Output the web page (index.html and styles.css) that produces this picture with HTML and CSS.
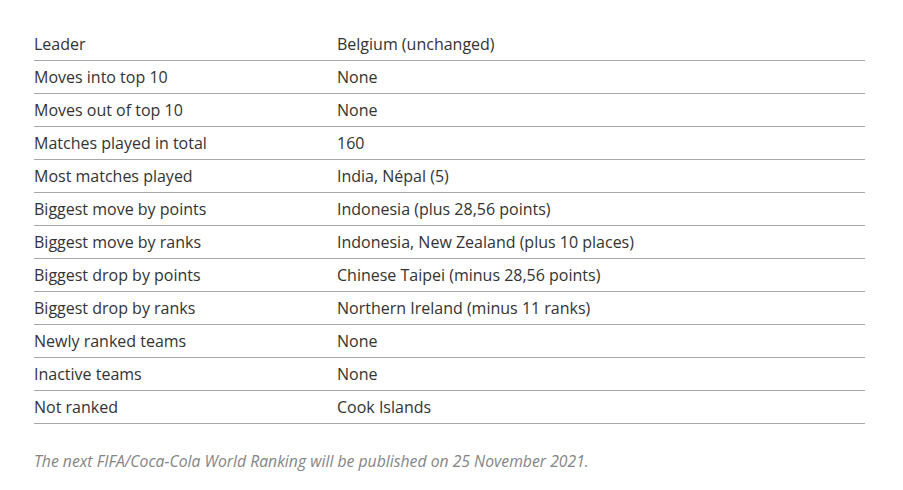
FILE: index.html
```html
<!DOCTYPE html>
<html>
<head>
<meta charset="utf-8">
<link rel="stylesheet" href="styles.css">
</head>
<body>
<div class="wrap">
  <table class="stats">
    <tbody>
      <tr><td>Leader</td><td>Belgium (unchanged)</td></tr>
      <tr><td>Moves into top 10</td><td>None</td></tr>
      <tr><td>Moves out of top 10</td><td>None</td></tr>
      <tr><td>Matches played in total</td><td>160</td></tr>
      <tr><td>Most matches played</td><td>India, Népal (5)</td></tr>
      <tr><td>Biggest move by points</td><td>Indonesia (plus 28,56 points)</td></tr>
      <tr><td>Biggest move by ranks</td><td>Indonesia, New Zealand (plus 10 places)</td></tr>
      <tr><td>Biggest drop by points</td><td>Chinese Taipei (minus 28,56 points)</td></tr>
      <tr><td>Biggest drop by ranks</td><td>Northern Ireland (minus 11 ranks)</td></tr>
      <tr><td>Newly ranked teams</td><td>None</td></tr>
      <tr><td>Inactive teams</td><td>None</td></tr>
      <tr><td>Not ranked</td><td>Cook Islands</td></tr>
    </tbody>
  </table>
  <p class="note">The next FIFA/Coca-Cola World Ranking will be published on 25 November 2021.</p>
</div>
</body>
</html>
```
FILE: styles.css
```css
html, body {
  margin: 0;
  padding: 0;
  background: #fff;
}
body {
  font-family: "Open Sans", "Noto Sans", sans-serif;
  color: #333;
}
.wrap {
  padding: 28px 38px 0 34px;
}
.stats {
  width: 831px;
  border-collapse: collapse;
  font-size: 16px;
}
.stats td {
  height: 32px;
  padding: 0;
  border-bottom: 1px solid #a8a8a8;
  vertical-align: middle;
  line-height: 22px;
}
.stats td:first-child {
  width: 303px;
}
.note {
  margin: 26px 0 0;
  font-size: 15.75px;
  font-style: italic;
  color: #858585;
}
```
